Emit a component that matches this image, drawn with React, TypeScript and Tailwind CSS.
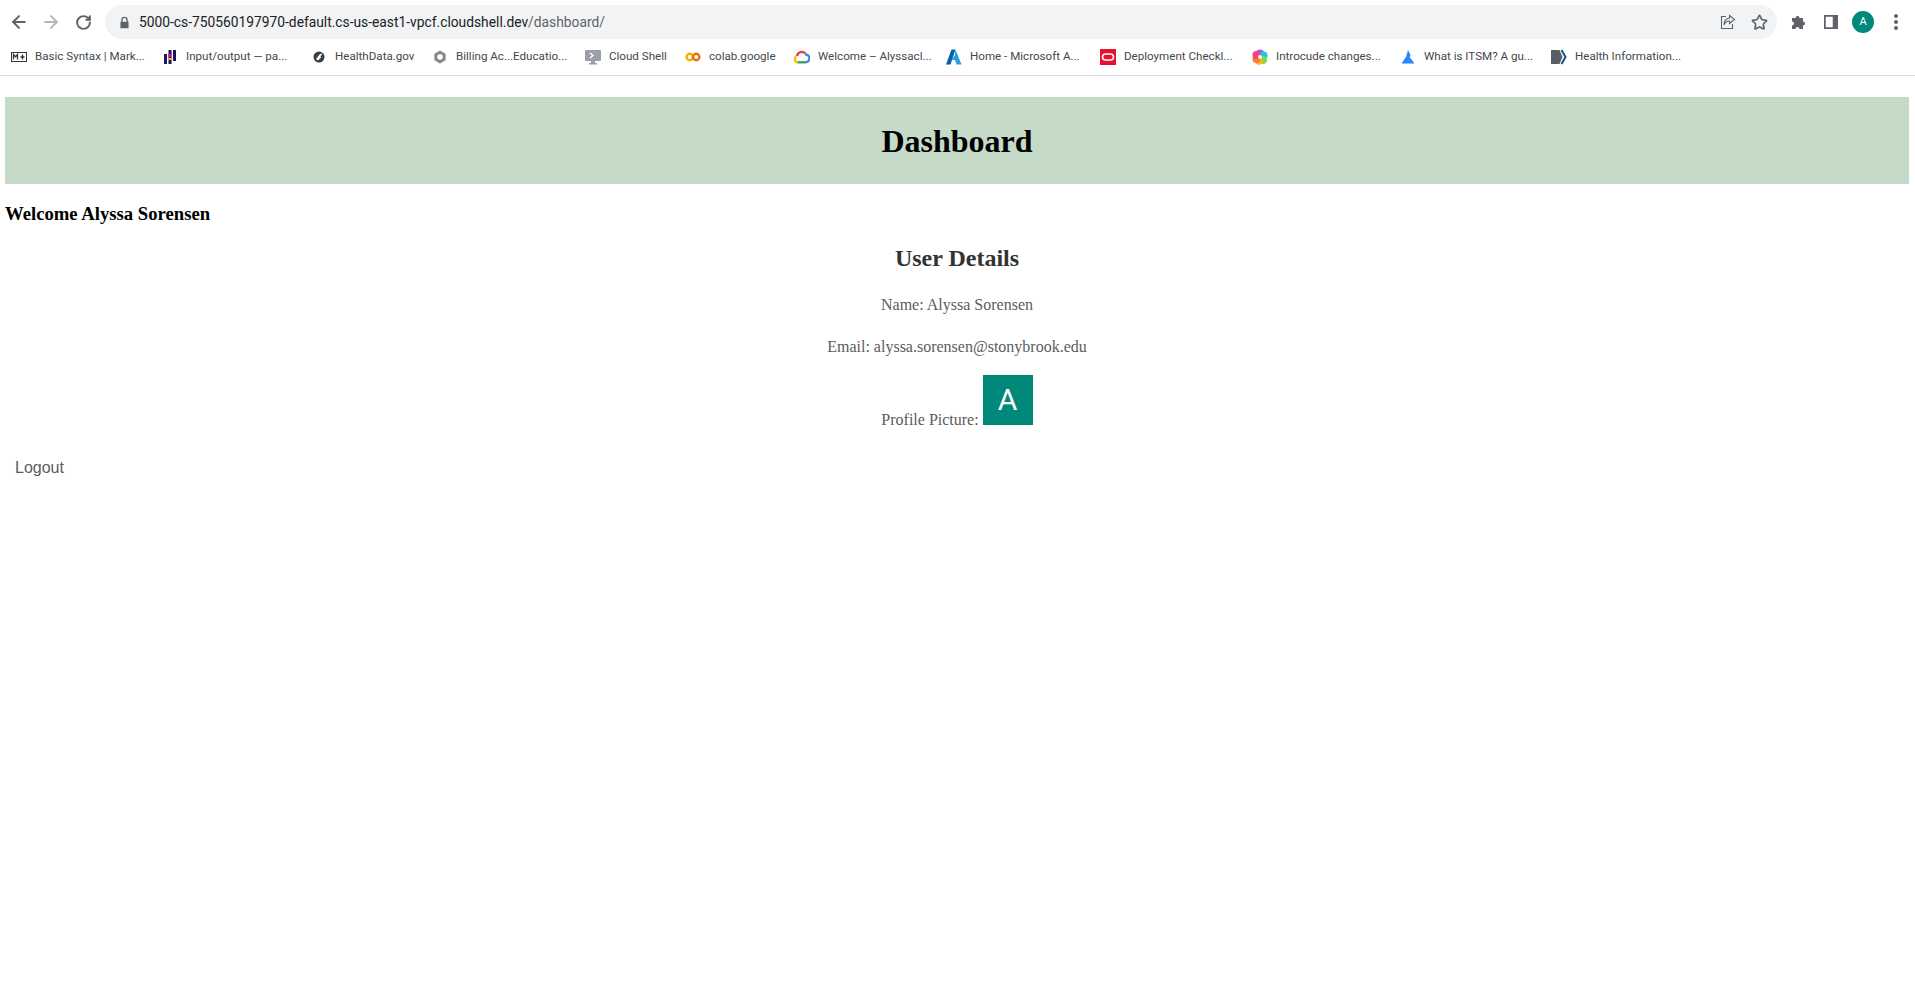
import type { ReactNode } from 'react';
import { ArrowLeft, ArrowRight, RotateCw, Star } from 'lucide-react';

const chromeFont = "font-['Roboto','Liberation_Sans',sans-serif]";

const bookmarks: { label: string; width: string; icon: ReactNode }[] = [
  {
    label: 'Basic Syntax | Mark...',
    width: 'w-[151px]',
    icon: (
      <svg viewBox="0 0 16 16" className="w-4 h-4">
        <rect x="0.5" y="3.5" width="15" height="9" fill="#fff" stroke="#333" />
        <path d="M2.500 10.500v-5l2 2.200 2-2.200v5M11.500 5.500v5M9.500 8h4" fill="none" stroke="#333" strokeWidth="1.300" />
      </svg>
    ),
  },
  {
    label: 'Input/output — pa...',
    width: 'w-[149px]',
    icon: (
      <svg viewBox="0 0 16 16" className="w-4 h-4">
        <rect x="2" y="5" width="3" height="10" fill="#1b1464" />
        <rect x="6.500" y="1" width="3" height="14" fill="#1b1464" />
        <rect x="11" y="1" width="3" height="11" fill="#1b1464" />
        <rect x="6.500" y="5" width="3" height="3" fill="#e6007e" />
        <rect x="6.500" y="9" width="3" height="2" fill="#f2c200" />
      </svg>
    ),
  },
  {
    label: 'HealthData.gov',
    width: 'w-[121px]',
    icon: (
      <svg viewBox="0 0 16 16" className="w-4 h-4">
        <circle cx="8" cy="8" r="5.500" fill="#3a3f46" />
        <path d="M5 10l4-5 2.500-.5-2 3 .5 1-3 3z" fill="#fff" />
      </svg>
    ),
  },
  {
    label: 'Billing Ac...Educatio...',
    width: 'w-[153px]',
    icon: (
      <svg viewBox="0 0 16 16" className="w-4 h-4">
        <path d="M8 1.500l5.600 3.200v6.600L8 14.500l-5.600-3.200V4.700z" fill="#85888c" />
        <circle cx="8" cy="8" r="2.800" fill="#fff" />
      </svg>
    ),
  },
  {
    label: 'Cloud Shell',
    width: 'w-[100px]',
    icon: (
      <svg viewBox="0 0 16 16" className="w-4 h-4">
        <rect x="0" y="1" width="16" height="11" rx="1" fill="#9aa0a6" />
        <path d="M5 4l3 2.500L5 9" stroke="#fff" strokeWidth="1.400" fill="none" />
        <rect x="6" y="12" width="4" height="2" fill="#9aa0a6" />
        <rect x="4" y="14" width="8" height="1.500" fill="#9aa0a6" />
      </svg>
    ),
  },
  {
    label: 'colab.google',
    width: 'w-[109px]',
    icon: (
      <svg viewBox="0 0 16 16" className="w-4 h-4">
        <circle cx="4.800" cy="8" r="3.200" fill="none" stroke="#f9ab00" strokeWidth="2.400" />
        <circle cx="11.200" cy="8" r="3.200" fill="none" stroke="#e8710a" strokeWidth="2.400" />
      </svg>
    ),
  },
  {
    label: 'Welcome – Alyssacl...',
    width: 'w-[152px]',
    icon: (
      <svg viewBox="0 0 16 16" className="w-4 h-4">
        <path d="M4 13.500a3.200 3.200 0 0 1-1.500-6" fill="none" stroke="#fbbc04" strokeWidth="2.400" />
        <path d="M3 7a5 5 0 0 1 8.500-2.500" fill="none" stroke="#ea4335" strokeWidth="2.400" />
        <path d="M11 5.500a3.800 3.800 0 0 1 1 7.800" fill="none" stroke="#4285f4" strokeWidth="2.400" />
        <path d="M4 13.300h8" stroke="#34a853" strokeWidth="2.400" />
      </svg>
    ),
  },
  {
    label: 'Home - Microsoft A...',
    width: 'w-[154px]',
    icon: (
      <svg viewBox="0 0 16 16" className="w-4 h-4">
        <path d="M5.500 0.500h4L4.500 15.500H0z" fill="#0a5fb4" />
        <path d="M9.500 0.500l6 15h-5l-1.500-4.500H5.500L9 6z" fill="#2a9fe0" />
      </svg>
    ),
  },
  {
    label: 'Deployment Checkl...',
    width: 'w-[152px]',
    icon: (
      <svg viewBox="0 0 16 16" className="w-4 h-4">
        <rect width="16" height="16" fill="#e8112d" />
        <rect x="2.500" y="5" width="11" height="6" rx="3" fill="none" stroke="#fff" strokeWidth="1.600" />
      </svg>
    ),
  },
  {
    label: 'Introcude changes...',
    width: 'w-[148px]',
    icon: (
      <svg viewBox="0 0 16 16" className="w-4 h-4">
        <circle cx="8" cy="4.500" r="4" fill="#a855f7" />
        <circle cx="11.500" cy="6.500" r="4" fill="#22c3e6" />
        <circle cx="11" cy="11" r="4" fill="#7ed957" />
        <circle cx="7" cy="12" r="3.800" fill="#fbbc04" />
        <circle cx="4.500" cy="10" r="4" fill="#fb7a3c" />
        <circle cx="4.500" cy="6" r="4" fill="#f0427c" />
        <circle cx="8" cy="8" r="2" fill="#ffe9f2" />
      </svg>
    ),
  },
  {
    label: 'What is ITSM? A gu...',
    width: 'w-[151px]',
    icon: (
      <svg viewBox="0 0 16 16" className="w-4 h-4">
        <path d="M8 1l2.500 5-3 8.500H1.500L6 8z" fill="#2684ff" />
        <path d="M9.500 8l5 6.500h-7z" fill="#2684ff" />
      </svg>
    ),
  },
  {
    label: 'Health Information...',
    width: 'w-[130px]',
    icon: (
      <svg viewBox="0 0 16 16" className="w-4 h-4">
        <path d="M0 1h8.500l3 7-3 7H0z" fill="#5a5e66" />
        <path d="M10.500 1l4 7-4 7" fill="none" stroke="#1a4f8a" strokeWidth="2" />
      </svg>
    ),
  },
];

function BrowserChrome() {
  return (
    <div className={`bg-white border-b border-[#dadce0] ${chromeFont}`}>
      {/* Toolbar */}
      <div className="h-[39px] flex items-center pt-[5px]">
        <div className="flex items-center pl-[9px] w-[105px] gap-[12px] text-[#5f6368]">
          <ArrowLeft size={20} strokeWidth={2.400} />
          <ArrowRight size={20} strokeWidth={2.400} className="text-[#b4b6b9]" />
          <RotateCw size={17} strokeWidth={2.800} className="ml-[2px]" />
        </div>
        <div className="w-[1672px] h-[34px] bg-[#f1f3f4] rounded-full flex items-center pl-[13px] pr-[9px]">
          <svg viewBox="0 0 16 16" className="w-[13px] h-[13px] text-[#5f6368]" fill="currentColor">
            <path d="M4 7V5a4 4 0 0 1 8 0v2h1v8H3V7zm1.600 0h4.800V5a2.400 2.400 0 0 0-4.800 0z" />
          </svg>
          <span className="ml-[8px] text-[13.8px] text-[#202124]">
            5000-cs-750560197970-default.cs-us-east1-vpcf.cloudshell.dev
            <span className="text-[#5f6368]">/dashboard/</span>
          </span>
          <div className="ml-auto flex items-center gap-[15px] text-[#5f6368]">
            <svg viewBox="0 0 16 16" className="w-4 h-4" fill="none" stroke="currentColor" strokeWidth="1.100">
              <path d="M6 2.500H1.500v12h11V10" />
              <path d="M9.500 1.500l5 4-5 4V7C6.500 7 5 8.500 4 11c0-4 2-6.500 5.500-7z" />
            </svg>
            <Star size={17} strokeWidth={2.400} />
          </div>
        </div>
        <div className="flex-1 flex items-center pl-[14px] text-[#5f6368]">
          <svg viewBox="0 0 16 16" className="w-4 h-4" fill="currentColor">
            <path d="M1 4h3.500a2 2 0 1 1 4 0H12v3.500a2 2 0 1 1 0 4V15H8.500a2 2 0 1 0-4 0H1v-3.500a2 2 0 1 0 0-4z" />
          </svg>
          <svg viewBox="0 0 16 16" className="ml-[17px] w-[14px] h-[14px]">
            <rect x="1" y="1" width="14" height="14" fill="none" stroke="currentColor" strokeWidth="2" />
            <rect x="10" y="1" width="5" height="14" fill="currentColor" />
          </svg>
          <div className="ml-[14px] w-[22px] h-[22px] rounded-full bg-[#00897b] text-white text-[11px] flex items-center justify-center">
            A
          </div>
          <div className="ml-[20px] flex flex-col gap-[2px]">
            <span className="w-1 h-1 rounded-full bg-[#5f6368]" />
            <span className="w-1 h-1 rounded-full bg-[#5f6368]" />
            <span className="w-1 h-1 rounded-full bg-[#5f6368]" />
          </div>
        </div>
      </div>

      {/* Bookmarks bar */}
      <div className="h-[36px] flex items-center pl-[11px]">
        {bookmarks.map((b) => (
          <div key={b.label} className={`flex items-center gap-[8px] shrink-0 ${b.width}`}>
            {b.icon}
            <span className="text-[11.6px] text-[#44484c] whitespace-nowrap">{b.label}</span>
          </div>
        ))}
      </div>
    </div>
  );
}

export default function App() {
  return (
    <div className="min-h-[983px] bg-white">
      <BrowserChrome />
      <div className="pl-[5px] pr-[6px] pt-[21px] font-['Liberation_Serif',serif]">
        <div className="h-[87px] bg-[#c5dbc7] flex items-center justify-center">
          <h1 className="text-[32px] font-bold text-black leading-none">Dashboard</h1>
        </div>
        <h3 className="mt-[19px] text-[18.7px] font-bold text-black leading-[21px]">Welcome Alyssa Sorensen</h3>
        <div className="text-center text-[#5c5c5c]">
          <h2 className="mt-[21px] text-[24px] font-bold text-[#333] leading-[27px]">User Details</h2>
          <p className="mt-[24px] text-[16px] leading-[18px]">Name: Alyssa Sorensen</p>
          <p className="mt-[24px] text-[16px] leading-[18px]">Email: alyssa.sorensen@stonybrook.edu</p>
          <p className="mt-[19px] text-[16px]">
            Profile Picture:{' '}
            <span className="inline-block overflow-hidden w-[50px] h-[50px] bg-[#00897b] text-white text-[30px] leading-[50px] text-center font-['Roboto',sans-serif]">
              A
            </span>
          </p>
        </div>
        <a className="block mt-[27px] ml-[10px] text-[16px] text-[#5c5c5c] leading-[18px] font-['Liberation_Sans',sans-serif]">
          Logout
        </a>
      </div>
    </div>
  );
}
